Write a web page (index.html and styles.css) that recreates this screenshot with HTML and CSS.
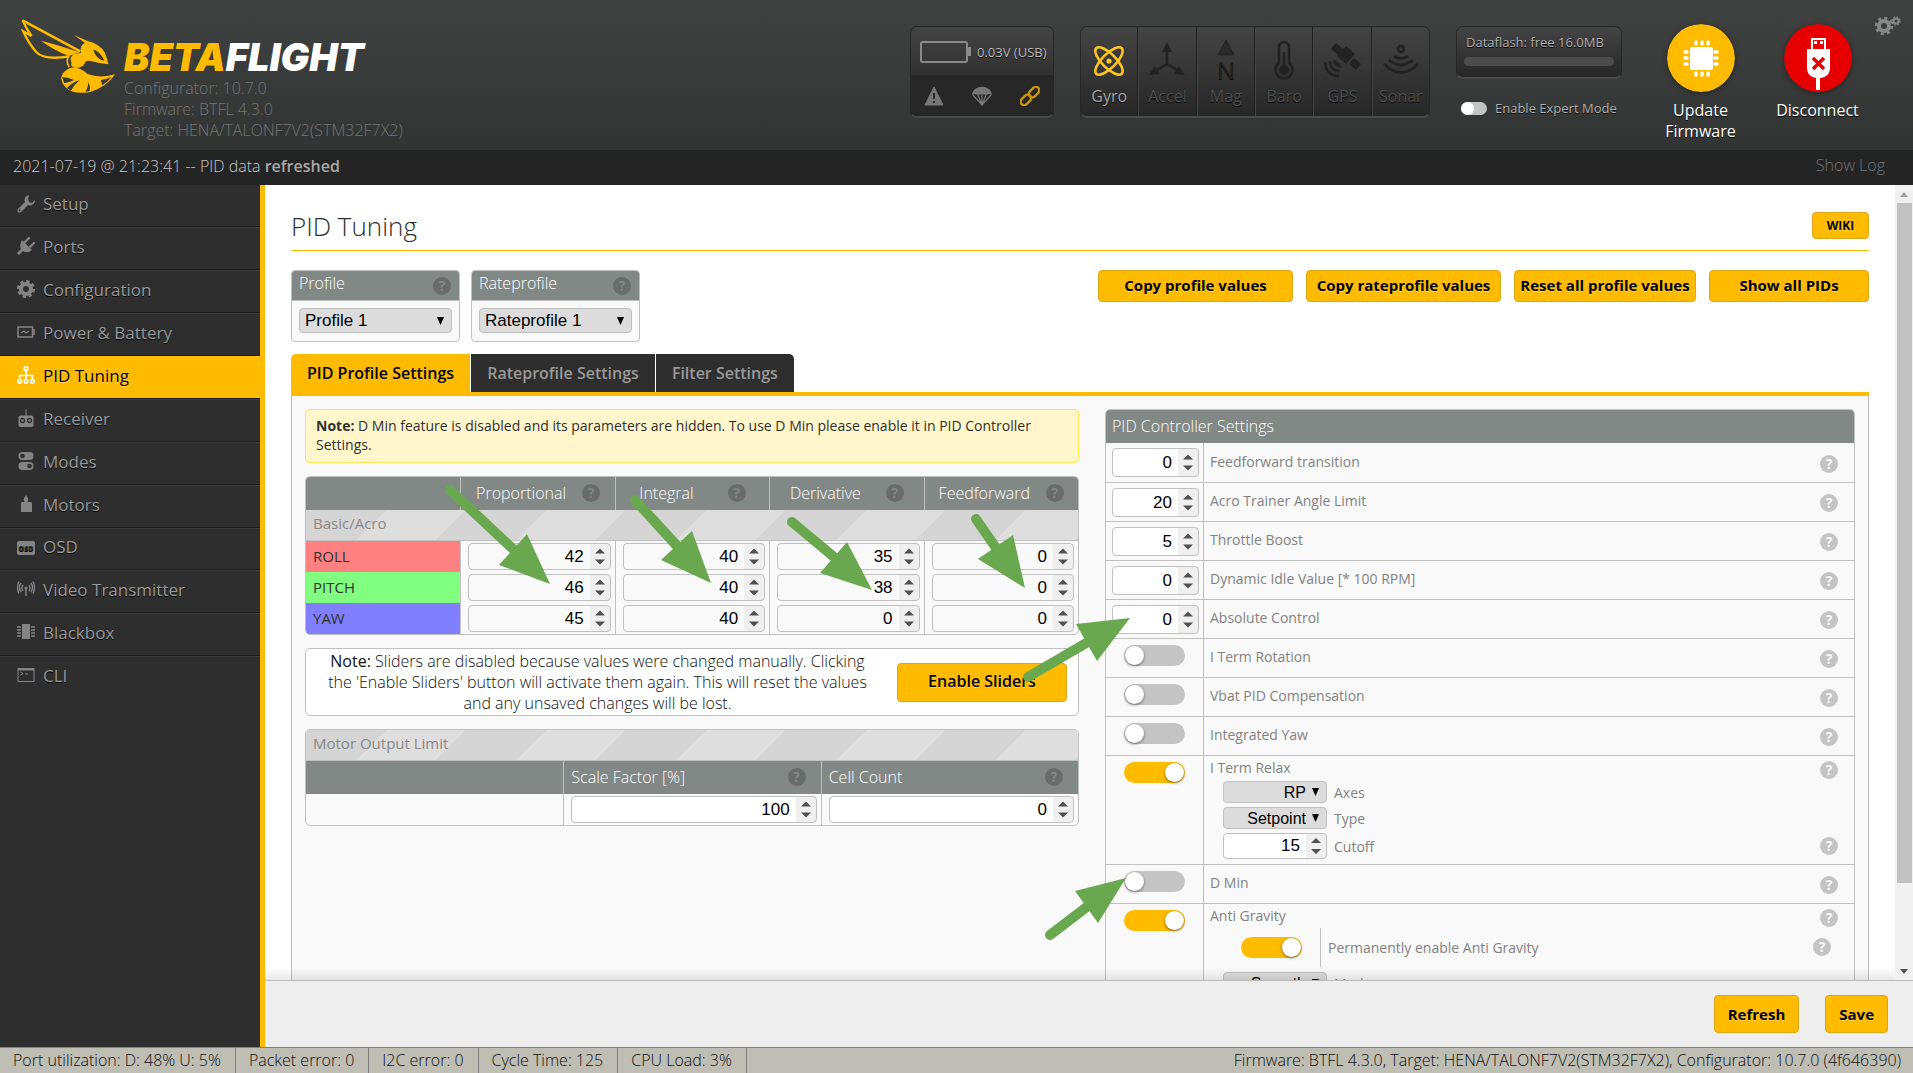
FILE: index.html
```html
<!DOCTYPE html>
<html lang="en">
<head>
<meta charset="utf-8">
<title>Betaflight Configurator</title>
<link rel="stylesheet" href="styles.css">
</head>
<body>
<header class="topbar">
  <div class="brand">
    <svg class="bee" viewBox="60 54 290 228" aria-hidden="true">
      <g fill="none" stroke="#ffbb00" stroke-width="6" stroke-linejoin="miter">
        <path d="M67 61 L240 154" stroke-width="8"/>
        <path d="M67 61 L80 86 L94 108 L69 94 Q84 128 108 156 Q132 182 208 169" stroke-width="7"/>
        <path d="M206 166 Q196 184 207 201" stroke-width="5"/>
      </g>
      <g fill="#ffbb00">
        <path d="M122 122 Q172 134 238 157 L206 168 Q160 150 122 122Z"/>
        <path d="M221 105 L262 123 Q300 132 314 158 Q320 172 325 193 Q296 190 272 183 Q256 180 254 190 Q248 203 228 204 Q208 200 214 188 Q206 172 222 162 L243 158 Q236 140 254 128 Z"/>
        <path d="M212 203 Q238 198 262 222 Q300 236 345 223 Q318 262 270 276 Q218 285 196 262 Q184 250 183 232 Q188 212 212 203Z"/>
      </g>
      <g fill="#383a39">
        <path d="M279 149 Q296 150 313 182 Q288 178 279 149Z"/>
        <path d="M186 231 Q206 232 222 240 Q204 248 192 250Z"/>
        <path d="M200 264 Q218 246 238 241 Q220 256 212 272Z"/>
        <path d="M256 275 Q266 258 264 246 Q272 262 268 273Z"/>
        <path d="M302 240 Q320 238 334 230 Q322 246 306 256Z"/>
      </g>
    </svg>
    <div class="brand-text">
      <div class="wordmark"><span>BETA</span>FLIGHT</div>
      <div>Configurator: 10.7.0</div>
      <div>Firmware: BTFL 4.3.0</div>
      <div>Target: HENA/TALONF7V2(STM32F7X2)</div>
    </div>
  </div>

  <div class="battery-box">
    <div class="battery-top">
      <svg width="51" height="22" viewBox="0 0 51 22" aria-hidden="true"><rect x="1" y="1" width="46" height="20" rx="2" fill="none" stroke="#8a8a8a" stroke-width="2"/><path d="M48 6h3v9h-3z" fill="#8a8a8a"/></svg>
      <span>0.03V (USB)</span>
    </div>
    <div class="battery-bottom">
      <svg width="20" height="20" viewBox="0 0 20 20" aria-hidden="true"><path d="M10 1 L19 19 H1Z" fill="#777" stroke="#777" stroke-linejoin="round"/><path d="M10 7v6M10 15v2" stroke="#272727" stroke-width="2"/></svg>
      <svg width="20" height="20" viewBox="0 0 20 20" aria-hidden="true"><path d="M0 9C1-2 19-2 20 9L17 8 14 9 10 8 6 9 3 8Z" fill="#777"/><path d="M1 9l9 10 9-10M6 9l4 10 4-10M10 8v11" fill="none" stroke="#777" stroke-width="1.3"/></svg>
      <svg width="20" height="20" viewBox="0 0 20 20" fill="none" stroke="#cc9600" stroke-width="2.4" aria-hidden="true"><rect x="8" y="2.6" width="12" height="7" rx="3.5" transform="rotate(-45 14 6)"/><rect x="0" y="10.4" width="12" height="7" rx="3.5" transform="rotate(-45 6 14)"/></svg>
    </div>
  </div>

  <ul class="sensors">
    <li class="on"><svg viewBox="0 0 36 38" fill="none" stroke="#ffc41f" stroke-width="2.6" aria-hidden="true"><ellipse cx="18" cy="20" rx="18" ry="7" transform="rotate(45 18 20)"/><ellipse cx="18" cy="20" rx="18" ry="7" transform="rotate(-45 18 20)"/><circle cx="18" cy="20" r="2.6" fill="#ffc41f" stroke="none"/></svg>Gyro</li>
    <li><svg viewBox="0 0 36 38" aria-hidden="true"><path d="M18 9v14L6 30M18 23l12 7" fill="none" stroke="#222" stroke-width="2.6"/><path d="M18 1l5 10H13zM0 34l6-9 5 8zM36 34l-6-9-5 8z" fill="#222"/></svg>Accel</li>
    <li><svg viewBox="0 0 36 38" aria-hidden="true"><path d="M18-1l8 15H10z" fill="#2a2a2a" stroke="#222"/><text x="18" y="38" text-anchor="middle" font-size="24" font-family="Open Sans, sans-serif" fill="#222">N</text></svg>Mag</li>
    <li><svg viewBox="0 0 36 38" aria-hidden="true"><path d="M13 22V6a5 5 0 0 1 10 0v16a8.500 8.500 0 1 1-10 0z" fill="none" stroke="#222" stroke-width="2.6"/><path d="M18 11v14" stroke="#222" stroke-width="2.6"/><circle cx="18" cy="29" r="5" fill="#222"/></svg>Baro</li>
    <li><svg viewBox="0 0 36 38" aria-hidden="true"><g fill="#222"><path d="M12 2l7 6-5 6-7-6zM22 5l9 8-9 10-9-8zM30 17l7 6-5 6-7-6z"/><path d="M9 18q0 8 9 9l-3-5z"/></g><path d="M6 20q0 10 10 10M1 21q1 14 14 14" fill="none" stroke="#222" stroke-width="2.6"/></svg>GPS</li>
    <li><svg viewBox="0 0 36 38" fill="none" stroke="#222" stroke-width="2.8" aria-hidden="true"><circle cx="18" cy="8" r="3"/><path d="M11 15q7 5 14 0M6 19q12 10 24 0M1 23q17 17 34 0"/></svg>Sonar</li>
  </ul>

  <div class="flash-col">
    <div class="flash-box"><span>Dataflash: free 16.0MB</span><div class="flash-bar"></div></div>
    <label class="expert"><input type="checkbox" class="switch small">Enable Expert Mode</label>
  </div>

  <div class="actions">
    <a href="#" class="action"><svg viewBox="0 0 68 68" aria-hidden="true"><circle cx="34" cy="34" r="34" fill="#ffbb00"/><rect x="23" y="23" width="23" height="23" rx="2" fill="#fff"/><path d="M30 18v2M36 18v2M42 18v2M30 49v2M36 49v2M42 49v2M19 28h2M19 34h2M19 40h2M49 28h2M49 34h2M49 40h2" transform="translate(-1 0)" stroke="#fff" stroke-width="3.500" stroke-linecap="round"/></svg>Update<br>Firmware</a>
    <a href="#" class="action"><svg viewBox="0 0 68 68" aria-hidden="true"><circle cx="34" cy="34" r="34" fill="#e60000"/><path d="M27 14h15v11h4v20q-1 8-9 9h-1v12h-4V54q-8-1-9-9V25h4z" fill="#fff"/><path d="M29 16h11v9H29z" fill="#e60000"/><path d="M30 17h3v3h-3zM36 17h3v3h-3z" fill="#fff"/><path d="M29 34l11 11M40 34L29 45" stroke="#e60000" stroke-width="3.500"/></svg>Disconnect</a>
  </div>
  <button class="options" type="button" aria-label="Options"><svg width="26" height="20" viewBox="0 0 26 20" fill="none" stroke="#888" aria-hidden="true"><circle cx="9" cy="10" r="5" stroke-width="4"/><circle cx="9" cy="10" r="8" stroke-width="2.500" stroke-dasharray="3.140 3.140"/><circle cx="21" cy="5" r="2.600" stroke-width="2"/><circle cx="21" cy="5" r="4" stroke-width="1.500" stroke-dasharray="1.570 1.570"/></svg></button>
</header>

<div class="logbar"><span>2021-07-19 @ 21:23:41 -- PID data <strong>refreshed</strong></span><a href="#">Show Log</a></div>

<div class="main">
  <nav class="sidebar">
    <a href="#"><svg viewBox="0 0 18 18" aria-hidden="true"><path d="M12 0a5 5 0 0 0-4 7L1 14a2 2 0 0 0 3 3l7-7a5 5 0 0 0 7-5l-3 3-3-1-1-3z" fill="currentColor"/><circle cx="2.700" cy="15.300" r="1" fill="#2e2e2e"/></svg>Setup</a>
    <a href="#"><svg viewBox="0 0 18 18" aria-hidden="true"><path d="M5 3l10 10q-5 4-9 1l-4 4-2-2 4-4q-2-4 1-9z" fill="currentColor"/><path d="M8 5l4-4M13 10l4-4" stroke="currentColor" stroke-width="2.200" stroke-linecap="round"/></svg>Ports</a>
    <a href="#"><svg viewBox="0 0 18 18" fill="none" stroke="currentColor" aria-hidden="true"><circle cx="9" cy="9" r="5" stroke-width="4"/><circle cx="9" cy="9" r="7.600" stroke-width="2.800" stroke-dasharray="3.300 2.660"/></svg>Configuration</a>
    <a href="#"><svg viewBox="0 0 18 18" fill="none" stroke="currentColor" aria-hidden="true"><rect x="1" y="4" width="14.500" height="10" stroke-width="1.500"/><path d="M17 6v6" stroke-width="1.600"/><path d="M4 10l3-2 2 2 3-2" stroke-width="1.200"/></svg>Power &amp; Battery</a>
    <a href="#" class="active"><svg viewBox="0 0 18 18" fill="none" stroke="currentColor" stroke-width="1.700" aria-hidden="true"><circle cx="9" cy="2.600" r="1.900"/><circle cx="2.600" cy="15.300" r="1.800"/><circle cx="9" cy="15.300" r="1.800"/><circle cx="15.400" cy="15.300" r="1.800"/><path d="M9 5v8M2.600 13V9.500h12.800V13"/></svg>PID Tuning</a>
    <a href="#"><svg viewBox="0 0 18 18" aria-hidden="true"><path d="M8.500 0h1v7h-1z" fill="currentColor"/><rect x="1.500" y="6.500" width="15" height="11.500" rx="2" fill="currentColor"/><g fill="none" stroke="#2e2e2e" stroke-width="1.300"><circle cx="5.500" cy="11.500" r="2"/><circle cx="12.500" cy="11.500" r="2"/></g></svg>Receiver</a>
    <a href="#"><svg viewBox="0 0 18 18" fill="currentColor" aria-hidden="true"><rect x="1.500" y="0" width="15" height="8" rx="4"/><rect x="1.500" y="10" width="15" height="8" rx="4"/><circle cx="5.500" cy="4" r="2.300" fill="#2e2e2e"/><circle cx="12.500" cy="14" r="2.300" fill="#2e2e2e"/></svg>Modes</a>
    <a href="#"><svg viewBox="0 0 18 18" fill="currentColor" aria-hidden="true"><path d="M9 0q4 5 1 7h4q1 0 1 2v8H4V9q0-2 1-2h3Q5 5 9 0z"/></svg>Motors</a>
    <a href="#" class="short"><svg viewBox="0 0 18 18" aria-hidden="true"><rect x="0" y="3" width="18" height="14" rx="2" fill="currentColor"/><text x="9" y="12.500" text-anchor="middle" font-size="7" font-weight="800" font-family="Open Sans, sans-serif" fill="#2e2e2e">OSD</text></svg>OSD</a>
    <a href="#"><svg viewBox="0 0 18 18" fill="none" stroke="currentColor" stroke-width="1.400" aria-hidden="true"><circle cx="9" cy="8" r="1.600" fill="currentColor" stroke="none"/><path d="M9 8v8M6 5q-2 3 0 6M12 5q2 3 0 6M4 3q-3 4.500 0 9M14 3q3 4.500 0 9M2 1.500q-3 6 0 12M16 1.500q3 6 0 12"/></svg>Video Transmitter</a>
    <a href="#"><svg viewBox="0 0 18 18" aria-hidden="true"><rect x="5" y="1" width="8" height="15" fill="currentColor"/><path d="M0 4h4M0 7h4M0 10h4M0 13h4M14 4h4M14 7h4M14 10h4M14 13h4" stroke="currentColor" stroke-width="1.600"/></svg>Blackbox</a>
    <a href="#" class="short"><svg viewBox="0 0 18 18" fill="none" stroke="currentColor" aria-hidden="true"><rect x="1" y="2.500" width="16" height="13"/><path d="M1 3.500h16" stroke-width="2"/><path d="M3.500 6l2.500 1.500L3.500 9M8 8h3"/></svg>CLI</a>
  </nav>

  <div class="workspace">
    <div class="scroller">
      <main class="content">
        <div class="title-row"><h1>PID Tuning</h1><a class="btn wiki" href="#">WIKI</a></div>

        <div class="profile-row">
          <div class="profile-box">
            <div class="head"><label for="profile">Profile</label><span class="help dark">?</span></div>
            <select id="profile"><option>Profile 1</option></select>
          </div>
          <div class="profile-box">
            <div class="head"><label for="rateprofile">Rateprofile</label><span class="help dark">?</span></div>
            <select id="rateprofile"><option>Rateprofile 1</option></select>
          </div>
          <div class="profile-actions">
            <button type="button" class="btn">Copy profile values</button>
            <button type="button" class="btn">Copy rateprofile values</button>
            <button type="button" class="btn">Reset all profile values</button>
            <button type="button" class="btn">Show all PIDs</button>
          </div>
        </div>

        <div class="tabs">
          <a href="#" class="current">PID Profile Settings</a>
          <a href="#">Rateprofile Settings</a>
          <a href="#">Filter Settings</a>
        </div>

        <div class="panel">
          <div class="col">
            <p class="note"><strong>Note:</strong> D Min feature is disabled and its parameters are hidden. To use D Min please enable it in PID Controller Settings.</p>

            <table class="grid pid">
              <thead>
                <tr class="cols"><td></td>
                  <th><div class="th">Proportional<span class="help dark">?</span></div></th>
                  <th><div class="th wide">Integral<span class="help dark">?</span></div></th>
                  <th><div class="th medium">Derivative<span class="help dark">?</span></div></th>
                  <th><div class="th">Feedforward<span class="help dark">?</span></div></th></tr>
              </thead>
              <tbody>
                <tr class="stripe"><th colspan="5">Basic/Acro</th></tr>
                <tr><th class="roll">ROLL</th><td><input type="number" aria-label="Roll P" value="42"></td><td><input type="number" aria-label="Roll I" value="40"></td><td><input type="number" aria-label="Roll D" value="35"></td><td><input type="number" aria-label="Roll F" value="0"></td></tr>
                <tr><th class="pitch">PITCH</th><td><input type="number" aria-label="Pitch P" value="46"></td><td><input type="number" aria-label="Pitch I" value="40"></td><td><input type="number" aria-label="Pitch D" value="38"></td><td><input type="number" aria-label="Pitch F" value="0"></td></tr>
                <tr><th class="yaw">YAW</th><td><input type="number" aria-label="Yaw P" value="45"></td><td><input type="number" aria-label="Yaw I" value="40"></td><td><input type="number" aria-label="Yaw D" value="0"></td><td><input type="number" aria-label="Yaw F" value="0"></td></tr>
              </tbody>
            </table>

            <div class="sliders-note">
              <p><strong>Note:</strong> Sliders are disabled because values were changed manually. Clicking the 'Enable Sliders' button will activate them again. This will reset the values and any unsaved changes will be lost.</p>
              <button type="button" class="btn large">Enable Sliders</button>
            </div>

            <table class="grid motor">
              <thead>
                <tr class="stripe"><th colspan="3">Motor Output Limit</th></tr>
                <tr class="cols"><td></td>
                  <th><div class="th left"><label for="scale">Scale Factor [%]</label><span class="help dark">?</span></div></th>
                  <th><div class="th left"><label for="cells">Cell Count</label><span class="help dark">?</span></div></th></tr>
              </thead>
              <tbody>
                <tr><td></td><td><input id="scale" type="number" value="100"></td><td><input id="cells" type="number" value="0"></td></tr>
              </tbody>
            </table>
          </div>

          <section class="controller">
            <h2>PID Controller Settings</h2>
            <div class="row first"><div class="ctl"><input id="c1" type="number" value="0"></div><div class="desc"><label for="c1">Feedforward transition</label><span class="help">?</span></div></div>
            <div class="row"><div class="ctl"><input id="c2" type="number" value="20"></div><div class="desc"><label for="c2">Acro Trainer Angle Limit</label><span class="help">?</span></div></div>
            <div class="row"><div class="ctl"><input id="c3" type="number" value="5"></div><div class="desc"><label for="c3">Throttle Boost</label><span class="help">?</span></div></div>
            <div class="row"><div class="ctl"><input id="c4" type="number" value="0"></div><div class="desc"><label for="c4">Dynamic Idle Value [* 100 RPM]</label><span class="help">?</span></div></div>
            <div class="row"><div class="ctl"><input id="c5" type="number" value="0"></div><div class="desc"><label for="c5">Absolute Control</label><span class="help">?</span></div></div>
            <div class="row"><div class="ctl"><input id="c6" type="checkbox" class="switch"></div><div class="desc"><label for="c6">I Term Rotation</label><span class="help">?</span></div></div>
            <div class="row"><div class="ctl"><input id="c7" type="checkbox" class="switch"></div><div class="desc"><label for="c7">Vbat PID Compensation</label><span class="help">?</span></div></div>
            <div class="row"><div class="ctl"><input id="c8" type="checkbox" class="switch"></div><div class="desc"><label for="c8">Integrated Yaw</label><span class="help">?</span></div></div>
            <div class="row multi">
              <div class="ctl"><input id="c9" type="checkbox" class="switch" checked></div>
              <div class="group">
                <div class="line"><label for="c9">I Term Relax</label><span class="help">?</span></div>
                <div class="sub"><select id="axes"><option>RP</option></select><label for="axes">Axes</label></div>
                <div class="sub"><select id="type"><option>Setpoint</option></select><label for="type">Type</label></div>
                <div class="sub"><input id="cutoff" type="number" value="15"><label for="cutoff">Cutoff</label><span class="help">?</span></div>
              </div>
            </div>
            <div class="row"><div class="ctl"><input id="c10" type="checkbox" class="switch"></div><div class="desc"><label for="c10">D Min</label><span class="help">?</span></div></div>
            <div class="row multi">
              <div class="ctl"><input id="c11" type="checkbox" class="switch" checked></div>
              <div class="group">
                <div class="line"><label for="c11">Anti Gravity</label><span class="help">?</span></div>
                <div class="permanent"><input id="perm" type="checkbox" class="switch" checked><label for="perm">Permanently enable Anti Gravity</label><span class="help">?</span></div>
                <div class="sub"><select id="mode"><option>Smooth</option></select><label for="mode">Mode</label></div>
              </div>
            </div>
          </section>
        </div>
      </main>
      <div class="scrollbar" aria-hidden="true"><i class="up"></i><i class="thumb"></i><i class="down"></i></div>
    </div>
    <div class="toolbar"><button type="button" class="btn">Refresh</button><button type="button" class="btn">Save</button></div>
  </div>
</div>

<footer class="status">
  <span>Port utilization: D: 48% U: 5%</span><span>Packet error: 0</span><span>I2C error: 0</span><span>Cycle Time: 125</span><span>CPU Load: 3%</span>
  <div>Firmware: BTFL 4.3.0, Target: HENA/TALONF7V2(STM32F7X2), Configurator: 10.7.0 (4f646390)</div>
</footer>

<svg class="pointers" aria-hidden="true">
  <g stroke="#6aa84f" stroke-width="10" stroke-linecap="round">
    <path d="M450 490L514 550"/><path d="M635 500L678 547"/><path d="M792 522L834 557"/><path d="M976 519L996 548"/><path d="M1028 677L1088 642"/><path d="M1050 935L1088 906"/>
  </g>
  <g fill="#6aa84f">
    <path d="M527 534L499 565L550 584Z"/><path d="M692 531L661 560L711 583Z"/><path d="M847 542L820 573L872 590Z"/><path d="M1013 535L978 559L1025 588Z"/><path d="M1076 624L1097 661L1130 618Z"/><path d="M1075 891L1098 923L1126 878Z"/>
  </g>
</svg>
</body>
</html>
```
FILE: styles.css
```css
* { box-sizing: border-box; }
body { margin: 0; height: 100vh; display: flex; flex-direction: column; overflow: hidden; font-family: "Open Sans", sans-serif; font-size: 14px; color: #303030; background: #2e2e2e; }
a { color: inherit; text-decoration: none; }
p, h1, h2, ul { margin: 0; padding: 0; }

.topbar { position: relative; flex: none; height: 150px; display: flex; align-items: flex-start; padding: 0 37px 0 20px; background: linear-gradient(#3f4241, #323433); }
.brand { display: flex; align-items: flex-start; gap: 7px; margin-right: auto; padding-top: 18px; }
.bee { width: 97px; height: 76px; }
.brand-text { padding-top: 18px; font-size: 16px; line-height: 21px; font-weight: 300; color: #747474; white-space: nowrap; }
.wordmark { font: italic 900 38px/42px Inter, sans-serif; color: #fff; }
.wordmark span { color: #ffbb00; }

.battery-box, .sensors, .flash-box { border: 1px solid #272727; border-bottom: 2px solid #4a4a4a; border-radius: 7px; background: linear-gradient(#434443, #272727); text-shadow: 0 1px #000; }
.battery-box { width: 144px; height: 92px; margin: 26px 26px 0 0; background: linear-gradient(#434443, #303030 50px, #272727 50px); color: #bbb; font-size: 13px; }
.battery-top { height: 48px; display: flex; align-items: center; gap: 6px; padding: 1px 0 0 9px; white-space: nowrap; }
.battery-bottom { height: 41px; display: flex; align-items: center; justify-content: space-between; padding: 0 13px; background: #272727; border-radius: 0 0 6px 6px; }
.sensors { width: 350px; height: 92px; display: flex; margin: 26px 26px 0 0; list-style: none; overflow: hidden; }
.sensors li { flex: 1; display: flex; flex-direction: column; align-items: center; padding-top: 14px; font-size: 16px; line-height: 22px; color: #4f4f4f; border-left: 1px solid #444; border-right: 1px solid #202020; }
.sensors li:first-child { border-left: 0; }
.sensors li:last-child { border-right: 0; }
.sensors svg { width: 36px; height: 38px; margin-bottom: 6px; overflow: visible; }
.sensors .on { color: #a6a6a6; }

.flash-col { width: 166px; margin: 26px 20px 0 0; color: #b0b0b0; font-size: 13px; text-shadow: 0 1px #000; white-space: nowrap; }
.flash-box { height: 53px; padding: 4px 7px; line-height: 22px; }
.flash-box span { padding-left: 2px; }
.flash-bar { height: 9px; margin-top: 4px; border-radius: 5px; background: #4c4c4c; }
.expert { display: flex; align-items: center; gap: 8px; margin-top: 19px; padding-left: 5px; line-height: 20px; }
.actions { display: flex; padding-top: 24px; }
.action { width: 117px; display: flex; flex-direction: column; align-items: center; text-align: center; font-size: 16px; line-height: 21px; color: #fff; text-shadow: 0 1px #000; }
.action svg { width: 68px; height: 68px; margin-bottom: 8px; border-radius: 50%; box-shadow: 0 1px 5px rgba(0,0,0,.4); }
.options { position: absolute; top: 16px; right: 12px; padding: 0; border: 0; background: none; line-height: 0; }

.logbar { flex: none; height: 35px; display: flex; justify-content: space-between; padding: 0 28px 0 13px; background: #242424; color: #c4c4c4; font-size: 16px; font-weight: 300; line-height: 33px; }
.logbar strong { font-weight: 600; color: #a8a8a8; }
.logbar a { color: #747474; line-height: 30px; }

.main { flex: 1; min-height: 0; display: flex; }
.sidebar { flex: none; width: 265px; border-right: 5px solid #ffbb00; background: #2e2e2e; }
.sidebar a { height: 43px; display: flex; align-items: center; gap: 8px; padding: 0 0 5px 17px; border-top: 1px solid #3c3c3c; border-bottom: 1px solid #1c1c1c; font-size: 17px; color: #999; text-shadow: 0 1px #000; }
.sidebar a:first-child { border-top-color: #2e2e2e; }
.sidebar a:first-child, .sidebar .short { height: 42px; }
.sidebar a:last-child { border-bottom: 0; }
.sidebar svg { width: 18px; height: 18px; color: #848484; }
.sidebar .active { border-top-color: #ffbb00; background: #ffbb00; color: #000; text-shadow: 0 1px rgba(255,255,255,.45); }
.sidebar .active svg { color: #fff; }

.workspace { flex: 1; min-width: 0; display: flex; flex-direction: column; background: #fff; }
.scroller { position: relative; flex: 1; min-height: 0; display: flex; overflow: hidden; }
.scroller::after { content: ""; position: absolute; inset: auto 18px 0 0; height: 12px; background: linear-gradient(transparent, rgba(0,0,0,.09)); }
.content { flex: 1; min-width: 0; height: 100%; overflow: hidden; padding: 22px 26px 0; }
.scrollbar { flex: none; width: 18px; display: flex; flex-direction: column; align-items: center; padding: 7px 0 6px; background: #f1f1f1; }
.scrollbar i { border: 4px solid transparent; }
.scrollbar .up { border-top: 0; border-bottom: 5px solid #a3a3a3; }
.scrollbar .down { margin-top: auto; border-bottom: 0; border-top: 5px solid #505050; }
.scrollbar .thumb { width: 15px; height: 87%; margin-top: 6px; border: 0; background: #c1c1c1; }

.title-row { display: flex; align-items: flex-start; justify-content: space-between; height: 44px; border-bottom: 1px solid #ffbb00; }
h1 { font-size: 26px; line-height: 38px; font-weight: 300; }
.btn { display: inline-block; padding: 0 0 2px; border: 1px solid #dba718; border-radius: 4px; background: #ffbb00; color: #000; font: bold 15px/28px "Open Sans", sans-serif; text-align: center; text-shadow: 0 1px rgba(255,255,255,.3); white-space: nowrap; }
.btn.wiki { width: 57px; margin-top: 5px; padding: 0; font-size: 12px; line-height: 25px; }
.btn.large { font-size: 16px; font-weight: 600; line-height: 35px; }

.profile-row { display: flex; align-items: flex-start; gap: 11px; margin-top: 19px; }
.profile-box { width: 169px; height: 72px; border: 1px solid #c0c0c0; border-radius: 4px; background: #f9f9f9; overflow: hidden; }
.head { height: 31px; margin: -1px -1px 0; display: flex; align-items: center; justify-content: space-between; padding: 2px 9px 0 8px; background: #828885; border-bottom: 1px solid #c0c0c0; color: #fff; font-size: 16px; font-weight: 300; line-height: 20px; }
.head label { margin-top: -6px; }
.help { flex: none; width: 18px; height: 18px; border-radius: 50%; background: #c4c4c4; color: #f9f9f9; font-size: 14px; line-height: 18px; font-weight: bold; text-align: center; }
.help.dark { background: #686c6a; color: #828885; }
select { appearance: none; border: 1px solid #c0c0c0; border-radius: 4px; color: #000; font: 17px "Liberation Sans", Arial, sans-serif; background: #dcdcdc url("data:image/svg+xml,%3Csvg xmlns='http://www.w3.org/2000/svg' width='7' height='8'%3E%3Cpath d='M0 0h7L3.5 8z'/%3E%3C/svg%3E") no-repeat right 7px center; }
.profile-box select { display: block; width: 153px; height: 25px; margin: 7px 7px 0; padding: 0 20px 0 5px; }
.profile-actions { display: flex; gap: 13px; margin-left: auto; }
.profile-actions .btn { width: 195px; }
.profile-actions .btn:nth-child(3) { width: 182px; }
.profile-actions .btn:nth-child(4) { width: 160px; }

.tabs { display: flex; gap: 1px; margin-top: 12px; border-bottom: 4px solid #ffbb00; }
.tabs a { padding: 0 16px; background: #2e2e2e; color: #999; font-size: 16px; line-height: 38px; font-weight: 600; }
.tabs .current { background: #ffbb00; color: #000; border-radius: 5px 0 0 0; }
.tabs a:last-child { border-radius: 0 5px 0 0; }

.panel { display: grid; grid-template-columns: 774fr 750fr; gap: 26px; padding: 13px; background: #f9f9f9; border: 1px solid #c0c0c0; border-top: 0; }
.note { padding: 6px 10px 8px; border: 1px solid #ffe55f; border-radius: 4px; background: #fff6cc; line-height: 19px; }

input[type=number] { appearance: textfield; display: block; height: 27px; padding: 0 26px 0 4px; border: 1px solid #c0c0c0; border-radius: 4px; color: #000; font: 17px "Liberation Sans", Arial, sans-serif; text-align: right; background: #fff url("data:image/svg+xml,%3Csvg xmlns='http://www.w3.org/2000/svg' width='20' height='30'%3E%3Cpath fill='%23efefef' d='M0 0h20v30H0z'/%3E%3Cpath fill='%23505050' d='M5 12l5-5 5 5zM5 18h10l-5 5z'/%3E%3C/svg%3E") no-repeat right center; }
input::-webkit-inner-spin-button, input::-webkit-outer-spin-button { appearance: none; margin: 0; }

.grid { width: 100%; table-layout: fixed; border-collapse: separate; border-spacing: 0; border: 1px solid #c0c0c0; border-radius: 5px; overflow: hidden; margin-top: 13px; }
.grid th { padding: 0; font-weight: 300; text-align: left; }
.grid td { padding: 0; }
.grid tbody td { height: 31px; padding: 0 4px 0 7px; }
.grid tbody tr > * + td, .cols > * + th { border-left: 1px solid #c0c0c0; }
.grid td input { width: 100%; }
.cols > * { height: 33px; background: #828885; color: #fff; font-size: 16px; }
.th { display: flex; align-items: center; justify-content: center; gap: 16px; margin-top: -2px; }
.th.medium { gap: 25px; }
.th.wide { gap: 34px; }
.th.left { justify-content: space-between; padding: 0 15px 0 7px; }
.pid tbody th { padding: 0 0 1px 7px; font-size: 15px; font-weight: 400; }
.grid .stripe th { height: 31px; padding: 0 7px 4px; border-bottom: 1px solid #c0c0c0; color: #888; font-size: 15px; font-weight: 400; background: repeating-linear-gradient(135deg, #d5d5d5 0 57px, #dedede 57px 113px); }
.roll { background: #ff8080; }
.pitch { background: #80ff80; }
.yaw { background: #8080ff; }
.pid input[type=number] { background-color: #f9f9f9; }

.sliders-note { display: flex; align-items: center; gap: 14px; margin-top: 13px; padding: 2px 11px 1px 6px; border: 1px solid #c0c0c0; border-radius: 5px; background: #fff; }
.sliders-note p { flex: 1; color: #111; font-size: 16px; font-weight: 300; line-height: 21px; text-align: center; padding: 0 6px; }
.sliders-note .btn { width: 170px; }

.controller { border: 1px solid #c0c0c0; border-radius: 5px 5px 0 0; overflow: hidden; color: #828282; }
h2 { padding-left: 6px; background: #828885; color: #fff; font-size: 16px; line-height: 33px; font-weight: 300; }
.row { display: flex; min-height: 39px; border-bottom: 1px solid #c0c0c0; }
.row.first { min-height: 40px; }
.ctl { flex: none; width: 98px; padding: 5px 4px 0 6px; border-right: 1px solid #c0c0c0; }
.ctl input[type=number] { width: 87px; height: 29px; }
.ctl .switch { margin: 1px 0 0 12px; }
.desc { flex: 1; display: flex; justify-content: space-between; padding: 8px 16px 0 6px; line-height: 19px; }
.first .desc { padding-top: 9px; }
.desc .help { margin-top: 3px; }
.group { flex: 1; display: flex; flex-direction: column; gap: 4px; padding: 3px 16px 5px 6px; }
.line { display: flex; justify-content: space-between; line-height: 18px; }
.line .help { margin: 2px 0 -2px; }
.sub { display: flex; align-items: center; gap: 7px; padding-left: 13px; }
.sub select { width: 104px; height: 22px; padding: 0 20px 0 0; font-size: 16px; text-align-last: right; }
.sub input[type=number] { width: 104px; height: 26px; }
.sub .help { margin-left: auto; }
.permanent { display: flex; align-items: center; height: 39px; padding: 0 7px 3px 31px; }
.permanent label { display: flex; align-items: center; height: 39px; margin-left: 18px; padding-left: 7px; border-left: 1px solid #c0c0c0; }
.permanent .help { margin-left: auto; }

.switch { appearance: none; display: block; flex: none; width: 61px; height: 21px; margin: 0; border-radius: 11px; background: #c4c4c4; }
.switch::before { content: ""; display: block; width: 19px; height: 19px; margin: 1px; border-radius: 50%; background: #fff; box-shadow: 0 1px 3px rgba(0,0,0,.5); }
.switch:checked { background: #ffbb00; }
.switch:checked::before { margin-left: 41px; }
.switch.small { width: 26px; height: 13px; }
.switch.small::before { width: 13px; height: 13px; margin: 0; box-shadow: none; }

.toolbar { flex: none; height: 67px; display: flex; justify-content: flex-end; align-items: flex-start; gap: 26px; padding: 14px 25px 0 0; border-top: 1px solid #bbb; background: #eee; }
.toolbar .btn { padding: 0 13px; line-height: 36px; }
.status { flex: none; height: 26px; display: flex; padding: 0 12px 0 0; border-top: 1px solid #7e7e7e; background: #bfbeb4; color: #111; font-size: 16px; font-weight: 300; line-height: 25px; white-space: nowrap; }
.status span { padding: 0 14px 0 13px; border-right: 1px solid #7e7e7e; }
.status div { margin-left: auto; }
.pointers { position: absolute; top: 0; left: 0; width: 100%; height: 100%; pointer-events: none; }
```
